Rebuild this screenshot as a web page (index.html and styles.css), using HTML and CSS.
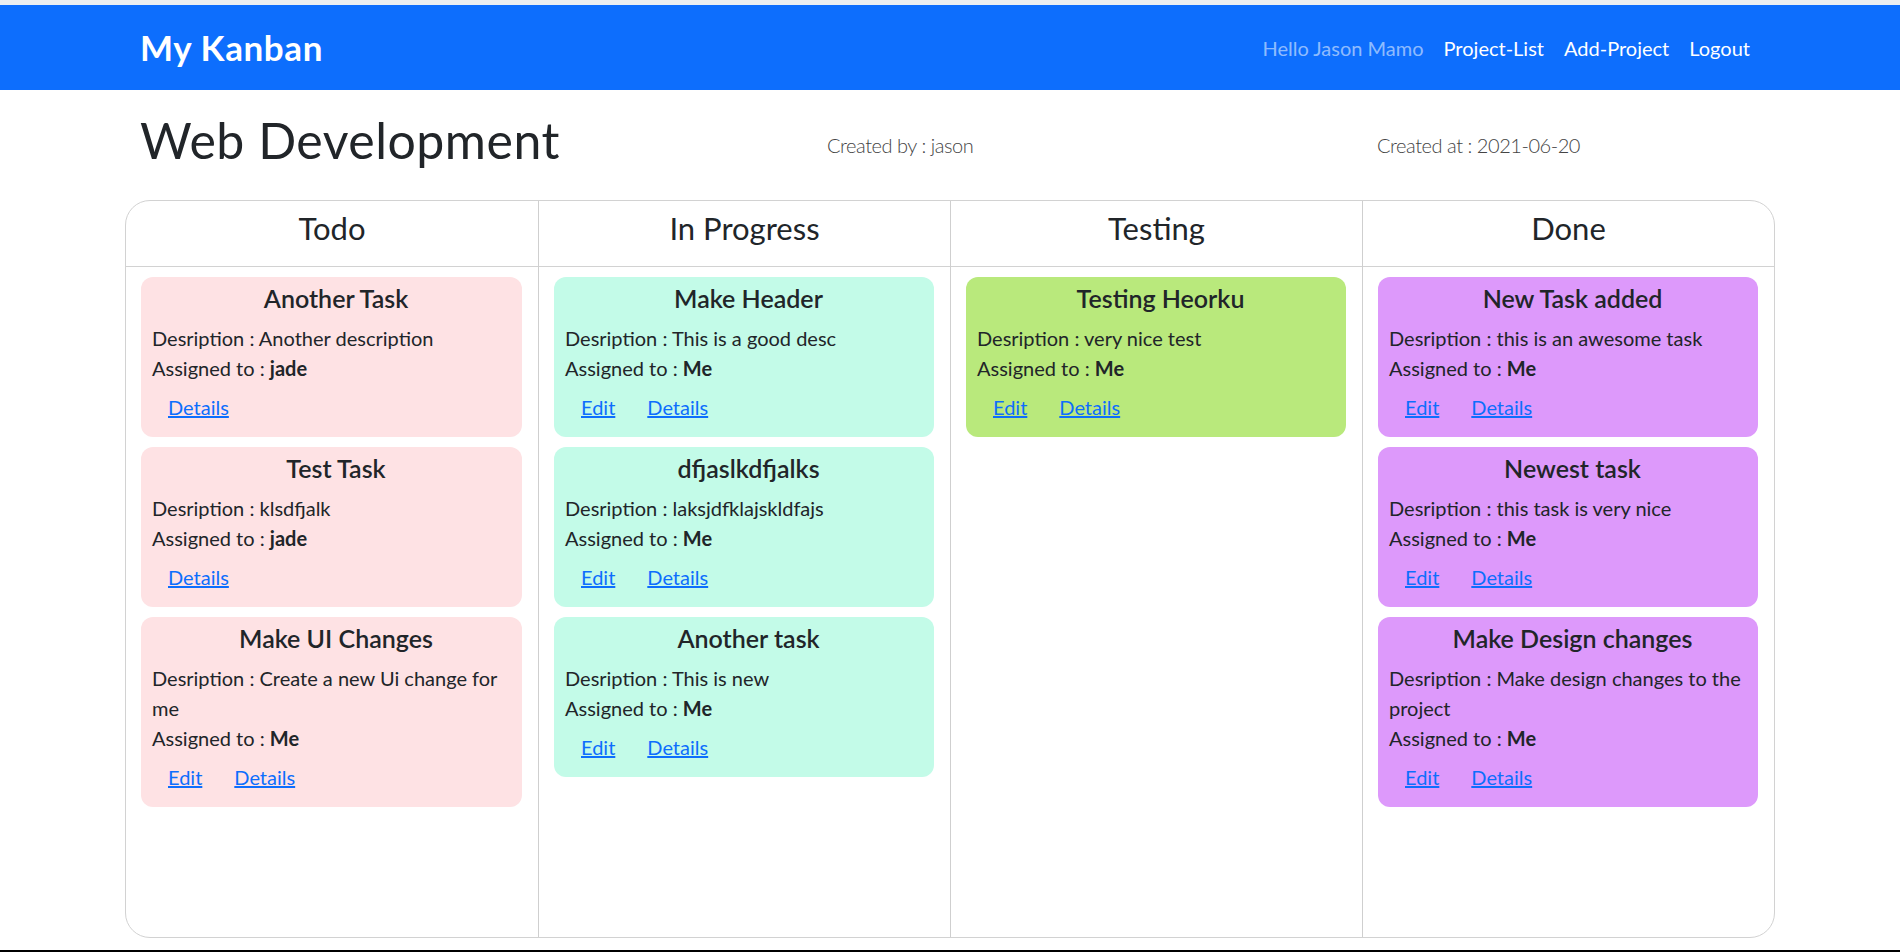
FILE: index.html
```html
<!DOCTYPE html>
<html lang="en">
<head>
<meta charset="utf-8">
<title>My Kanban</title>
<link rel="stylesheet" href="styles.css">
</head>
<body>
<div class="top-strip"></div>
<nav class="navbar">
  <div class="nav-inner">
    <a class="brand" href="#">My Kanban</a>
    <div class="nav-links">
      <span class="nav-text">Hello Jason Mamo</span>
      <a class="nav-link" href="#">Project-List</a>
      <a class="nav-link" href="#">Add-Project</a>
      <a class="nav-link" href="#">Logout</a>
    </div>
  </div>
</nav>
<main class="page">
  <div class="project-head">
    <h1 class="project-title">Web Development</h1>
    <p class="meta">Created by : jason</p>
    <p class="meta">Created at : 2021-06-20</p>
  </div>
  <div class="board">
    <section class="column">
      <h3 class="col-title">Todo</h3>
      <div class="col-body">
        <div class="task todo">
          <h5 class="task-title">Another Task</h5>
          <p class="line">Desription : Another description</p>
          <p class="line">Assigned to : <b>jade</b></p>
          <div class="actions"><a class="btn-link" href="#">Details</a></div>
        </div>
        <div class="task todo">
          <h5 class="task-title">Test Task</h5>
          <p class="line">Desription : klsdfjalk</p>
          <p class="line">Assigned to : <b>jade</b></p>
          <div class="actions"><a class="btn-link" href="#">Details</a></div>
        </div>
        <div class="task todo">
          <h5 class="task-title">Make UI Changes</h5>
          <p class="line">Desription : Create a new Ui change for me</p>
          <p class="line">Assigned to : <b>Me</b></p>
          <div class="actions"><a class="btn-link" href="#">Edit</a><a class="btn-link" href="#">Details</a></div>
        </div>
      </div>
    </section>
    <section class="column">
      <h3 class="col-title">In Progress</h3>
      <div class="col-body">
        <div class="task progress">
          <h5 class="task-title">Make Header</h5>
          <p class="line">Desription : This is a good desc</p>
          <p class="line">Assigned to : <b>Me</b></p>
          <div class="actions"><a class="btn-link" href="#">Edit</a><a class="btn-link" href="#">Details</a></div>
        </div>
        <div class="task progress">
          <h5 class="task-title">dfjaslkdfjalks</h5>
          <p class="line">Desription : laksjdfklajskldfajs</p>
          <p class="line">Assigned to : <b>Me</b></p>
          <div class="actions"><a class="btn-link" href="#">Edit</a><a class="btn-link" href="#">Details</a></div>
        </div>
        <div class="task progress">
          <h5 class="task-title">Another task</h5>
          <p class="line">Desription : This is new</p>
          <p class="line">Assigned to : <b>Me</b></p>
          <div class="actions"><a class="btn-link" href="#">Edit</a><a class="btn-link" href="#">Details</a></div>
        </div>
      </div>
    </section>
    <section class="column">
      <h3 class="col-title">Testing</h3>
      <div class="col-body">
        <div class="task testing">
          <h5 class="task-title">Testing Heorku</h5>
          <p class="line">Desription : very nice test</p>
          <p class="line">Assigned to : <b>Me</b></p>
          <div class="actions"><a class="btn-link" href="#">Edit</a><a class="btn-link" href="#">Details</a></div>
        </div>
      </div>
    </section>
    <section class="column">
      <h3 class="col-title">Done</h3>
      <div class="col-body">
        <div class="task done">
          <h5 class="task-title">New Task added</h5>
          <p class="line">Desription : this is an awesome task</p>
          <p class="line">Assigned to : <b>Me</b></p>
          <div class="actions"><a class="btn-link" href="#">Edit</a><a class="btn-link" href="#">Details</a></div>
        </div>
        <div class="task done">
          <h5 class="task-title">Newest task</h5>
          <p class="line">Desription : this task is very nice</p>
          <p class="line">Assigned to : <b>Me</b></p>
          <div class="actions"><a class="btn-link" href="#">Edit</a><a class="btn-link" href="#">Details</a></div>
        </div>
        <div class="task done">
          <h5 class="task-title">Make Design changes</h5>
          <p class="line">Desription : Make design changes to the project</p>
          <p class="line">Assigned to : <b>Me</b></p>
          <div class="actions"><a class="btn-link" href="#">Edit</a><a class="btn-link" href="#">Details</a></div>
        </div>
      </div>
    </section>
  </div>
</main>
<div class="bottom-strip"></div>
</body>
</html>
```
FILE: styles.css
```css
*, *::before, *::after { box-sizing: border-box; }

html, body { height: 100%; }

body {
  margin: 0;
  min-height: 100vh;
  display: flex;
  flex-direction: column;
  font-family: Lato, "Liberation Sans", sans-serif;
  font-size: 20px;
  line-height: 30px;
  color: #212529;
  background: #fff;
}

.top-strip {
  height: 5px;
  background: #eceff1;
  flex: none;
}

.navbar {
  background: #0d6efd;
  height: 85px;
  flex: none;
}

.nav-inner {
  width: 1650px;
  margin: 0 auto;
  padding: 0 15px;
  height: 100%;
  display: flex;
  align-items: center;
  justify-content: space-between;
}

.brand {
  color: #fff;
  text-decoration: none;
  font-weight: 700;
  font-size: 35px;
  line-height: 52.5px;
  letter-spacing: 0.6px;
  padding: 6px 0;
}

.nav-links {
  display: flex;
  align-items: center;
}

.nav-text,
.nav-link {
  padding: 0 10px;
  font-size: 20px;
  line-height: 30px;
  text-decoration: none;
}

.nav-text { color: rgba(255, 255, 255, 0.55); }
.nav-link { color: #fff; }

.page {
  width: 1650px;
  margin: 0 auto;
  flex: none;
}

.project-head {
  display: grid;
  grid-template-columns: repeat(3, 1fr);
  align-items: start;
  margin-top: 20px;
  height: 60px;
  margin-bottom: 30px;
}

.project-title {
  margin: 0;
  padding-left: 15px;
  font-size: 50px;
  line-height: 60px;
  font-weight: 400;
  letter-spacing: 0.5px;
  white-space: nowrap;
}

.meta {
  margin: 20px 0 0;
  padding-left: 152px;
  font-weight: 300;
  color: #444;
  letter-spacing: -0.45px;
  white-space: nowrap;
}

.board {
  height: 738px;
  border: 1px solid #d2d2d2;
  border-radius: 25px;
  display: grid;
  grid-template-columns: repeat(4, 1fr);
  overflow: hidden;
}

.column {
  display: flex;
  flex-direction: column;
  border-left: 1px solid #cfcfcf;
}

.column:first-child { border-left: none; }

.col-title {
  margin: 0;
  height: 66px;
  padding-bottom: 10px;
  border-bottom: 1px solid #d2d2d2;
  display: flex;
  align-items: center;
  justify-content: center;
  font-size: 31px;
  line-height: 37px;
  font-weight: 400;
}

.col-body {
  padding: 10px 16px 0 15px;
  display: flex;
  flex-direction: column;
  gap: 10px;
}

.task {
  border-radius: 12px;
  padding: 6px 8px 7px 11px;
}

.task.todo { background: #fee2e4; }
.task.progress { background: #c3fbe8; }
.task.testing { background: #b9e97c; }
.task.done { background: #dd99fb; }

.task-title {
  margin: 0 0 10px;
  padding-left: 6px;
  text-align: center;
  font-size: 25px;
  line-height: 30px;
  font-weight: 600;
}

.line {
  margin: 0;
}

.line b { font-weight: 700; }

.actions {
  display: flex;
  white-space: nowrap;
}

.btn-link {
  display: block;
  padding: 7.5px 15px;
  border: 1px solid transparent;
  color: #0d6efd;
  text-decoration: underline;
  font-size: 20px;
  line-height: 30px;
}

.bottom-strip {
  margin-top: auto;
  height: 2px;
  background: #000;
  flex: none;
}
```
